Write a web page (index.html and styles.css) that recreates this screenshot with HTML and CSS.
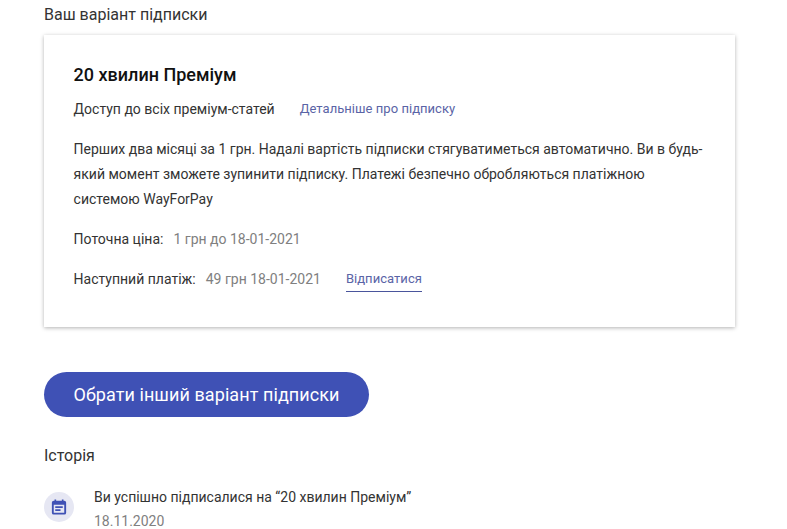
FILE: index.html
```html
<!DOCTYPE html>
<html lang="uk">
<head>
<meta charset="utf-8">
<title>Підписка</title>
<link rel="stylesheet" href="styles.css">
</head>
<body>
<main class="page">
  <h2 class="section-title">Ваш варіант підписки</h2>
  <section class="card">
    <h3 class="plan-name">20 хвилин Преміум</h3>
    <div class="access-row">
      <span>Доступ до всіх преміум-статей</span>
      <a class="link" href="#">Детальніше про підписку</a>
    </div>
    <p class="description">Перших два місяці за 1 грн. Надалі вартість підписки стягуватиметься автоматично. Ви в будь-який момент зможете зупинити підписку. Платежі безпечно обробляються платіжною системою WayForPay</p>
    <div class="price-row">
      <span>Поточна ціна:</span>
      <span class="muted">1 грн до 18-01-2021</span>
    </div>
    <div class="price-row next-row">
      <span>Наступний платіж:</span>
      <span class="muted">49 грн 18-01-2021</span>
      <a class="link unsubscribe" href="#">Відписатися</a>
    </div>
  </section>
  <button class="primary" type="button">Обрати інший варіант підписки</button>
  <h2 class="section-title history-title">Історія</h2>
  <div class="history-item">
    <span class="history-icon">
      <svg width="18" height="18" viewBox="0 0 24 24" aria-hidden="true"><path fill="#3f51b5" d="M19 3.500h-1V2h-2.200v1.500H8.200V2H6v1.500H5A2.500 2.500 0 0 0 2.500 6v13.500A2.500 2.500 0 0 0 5 22h14a2.500 2.500 0 0 0 2.500-2.500V6A2.500 2.500 0 0 0 19 3.500zm0 16H5V9h14v10.500zM7 11h10v2.200H7V11zm0 4h7v2.200H7V15z"/></svg>
    </span>
    <div class="history-text">
      <div>Ви успішно підписалися на “20 хвилин Преміум”</div>
      <div class="history-date">18.11.2020</div>
    </div>
  </div>
</main>
</body>
</html>
```

FILE: styles.css
```css
html, body {
  margin: 0;
  height: 100%;
  overflow: hidden;
  background: #fff;
}

body {
  font-family: Roboto, "Liberation Sans", sans-serif;
  color: #212121;
  font-size: 14px;
}

.page {
  width: 691px;
  margin-left: 44px;
  padding-top: 5px;
}

.section-title {
  margin: 0;
  font-size: 16px;
  font-weight: 400;
  line-height: 20px;
  color: #333;
}

.card {
  margin-top: 10px;
  height: 292px;
  box-sizing: border-box;
  padding: 30px 30px 0 29.6px;
  background: #fff;
  box-shadow: 0 1px 4px rgba(0, 0, 0, 0.3);
}

.plan-name {
  margin: 0;
  font-size: 18px;
  font-weight: 500;
  line-height: 20px;
  color: #111;
}

.access-row {
  display: flex;
  gap: 25px;
  margin-top: 14px;
  line-height: 20px;
  color: #333;
}

.link {
  color: #5a64a6;
  font-size: 13px;
  letter-spacing: 0.04px;
  text-decoration: none;
}

.description {
  margin: 18px 0 0;
  line-height: 25px;
  color: #333;
}

.price-row {
  display: flex;
  gap: 10px;
  margin-top: 17px;
  line-height: 20px;
  color: #333;
}

.next-row {
  margin-top: 20px;
}

.muted {
  color: #808080;
}

.unsubscribe {
  margin-left: 15px;
  padding-bottom: 2px;
  border-bottom: 1px solid #4a559c;
}

.primary {
  display: block;
  width: 325px;
  height: 45px;
  margin-top: 45px;
  padding: 0 0 1px;
  border: 0;
  border-radius: 23px;
  background: #3f51b5;
  color: #fff;
  font: 400 18px Roboto, "Liberation Sans", sans-serif;
  letter-spacing: 0.08px;
}

.history-title {
  margin-top: 29px;
}

.history-item {
  display: flex;
  gap: 20px;
  margin-top: 19px;
}

.history-icon {
  display: flex;
  align-items: center;
  justify-content: center;
  width: 30px;
  height: 30px;
  margin-top: 7px;
  border-radius: 50%;
  background: #e6e7f3;
}

.history-text {
  line-height: 24px;
  color: #333;
}

.history-date {
  color: #808080;
}
```
